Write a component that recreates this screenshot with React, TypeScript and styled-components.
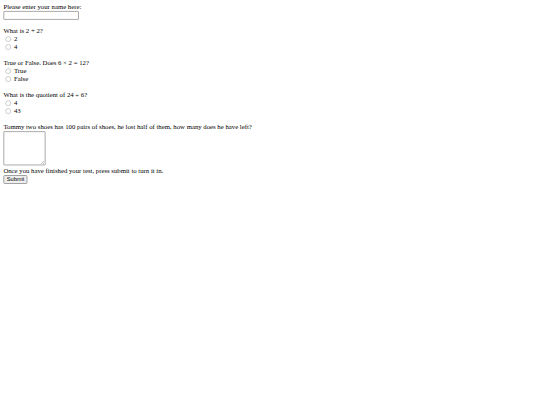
import React from "react";
import styled, { createGlobalStyle } from "styled-components";

const Global = createGlobalStyle`
  html, body { margin: 0; padding: 0; background: #fff; }
  body { font-family: "Liberation Serif", "Times New Roman", serif; color: #000; }
`;

const Frame = styled.div`
  width: 540px;
  height: 405px;
  overflow: hidden;
`;

const Viewport = styled.div`
  width: 1280px;
  height: 960px;
  transform: scale(0.421875);
  transform-origin: 0 0;
`;

const Form = styled.form`
  display: flex;
  flex-direction: column;
  align-items: flex-start;
  padding: 8px 0 0 8px;
  font-size: 16px;
  line-height: 18.4px;
`;

const Line = styled.div<{ $mt?: number; $h?: number }>`
  display: flex;
  align-items: center;
  height: ${(p) => p.$h ?? 19}px;
  white-space: nowrap;
  margin-top: ${(p) => p.$mt ?? 0}px;
`;

const TextInput = styled.input`
  box-sizing: border-box;
  width: 179px;
  height: 21px;
  margin: 0;
  padding: 1px 2px;
  border: 2px solid #9a9a9a;
  border-radius: 2px;
  font-size: 13px;
  background: #fff;
`;

const Option = styled.label`
  display: flex;
  align-items: center;
  height: 19px;
  gap: 7px;
  padding-left: 5px;
`;

const Radio = styled.input`
  appearance: none;
  box-sizing: border-box;
  width: 13px;
  height: 13px;
  margin: 0;
  border: 1.5px solid #8f8f8f;
  border-radius: 50%;
  background: #fff;
`;

const Area = styled.textarea`
  box-sizing: border-box;
  width: 100px;
  height: 81px;
  margin: 0;
  padding: 2px;
  border: 2px solid #9a9a9a;
  border-radius: 2px;
  font-size: 13px;
  resize: both;
`;

const Button = styled.button`
  box-sizing: border-box;
  height: 21px;
  padding: 0 6px;
  margin: 0;
  font-family: "Liberation Sans", Arial, sans-serif;
  font-size: 13.33px;
  line-height: 16px;
  color: #000;
  background: #efefef;
  border: 2px solid #8f8f8f;
  border-radius: 3px;
`;

const questions = [
  { q: "What is 2 + 2?", opts: ["2", "4"], mt: 16.6 },
  { q: "True or False. Does 6 × 2 = 12?", opts: ["True", "False"], mt: 19 },
  { q: "What is the quotient of 24 ÷ 6?", opts: ["4", "43"], mt: 19 },
];

export default function App() {
  return (
    <>
      <Global />
      <Frame>
        <Viewport>
          <Form onSubmit={(e) => e.preventDefault()}>
            <Line $h={18.4}>Please enter your name here:</Line>
            <TextInput type="text" />
            {questions.map((g, i) => (
              <React.Fragment key={i}>
                <Line $mt={g.mt}>{g.q}</Line>
                {g.opts.map((o) => (
                  <Option key={o}>
                    <Radio type="radio" name={`q${i}`} />
                    {o}
                  </Option>
                ))}
              </React.Fragment>
            ))}
            <Line $mt={19}>
              Tommy two shoes has 100 pairs of shoes, he lost half of them, how many does he have left?
            </Line>
            <Area />
            <Line $mt={4}>Once you have finished your test, press submit to turn it in.</Line>
            <Button type="submit">Submit</Button>
          </Form>
        </Viewport>
      </Frame>
    </>
  );
}
